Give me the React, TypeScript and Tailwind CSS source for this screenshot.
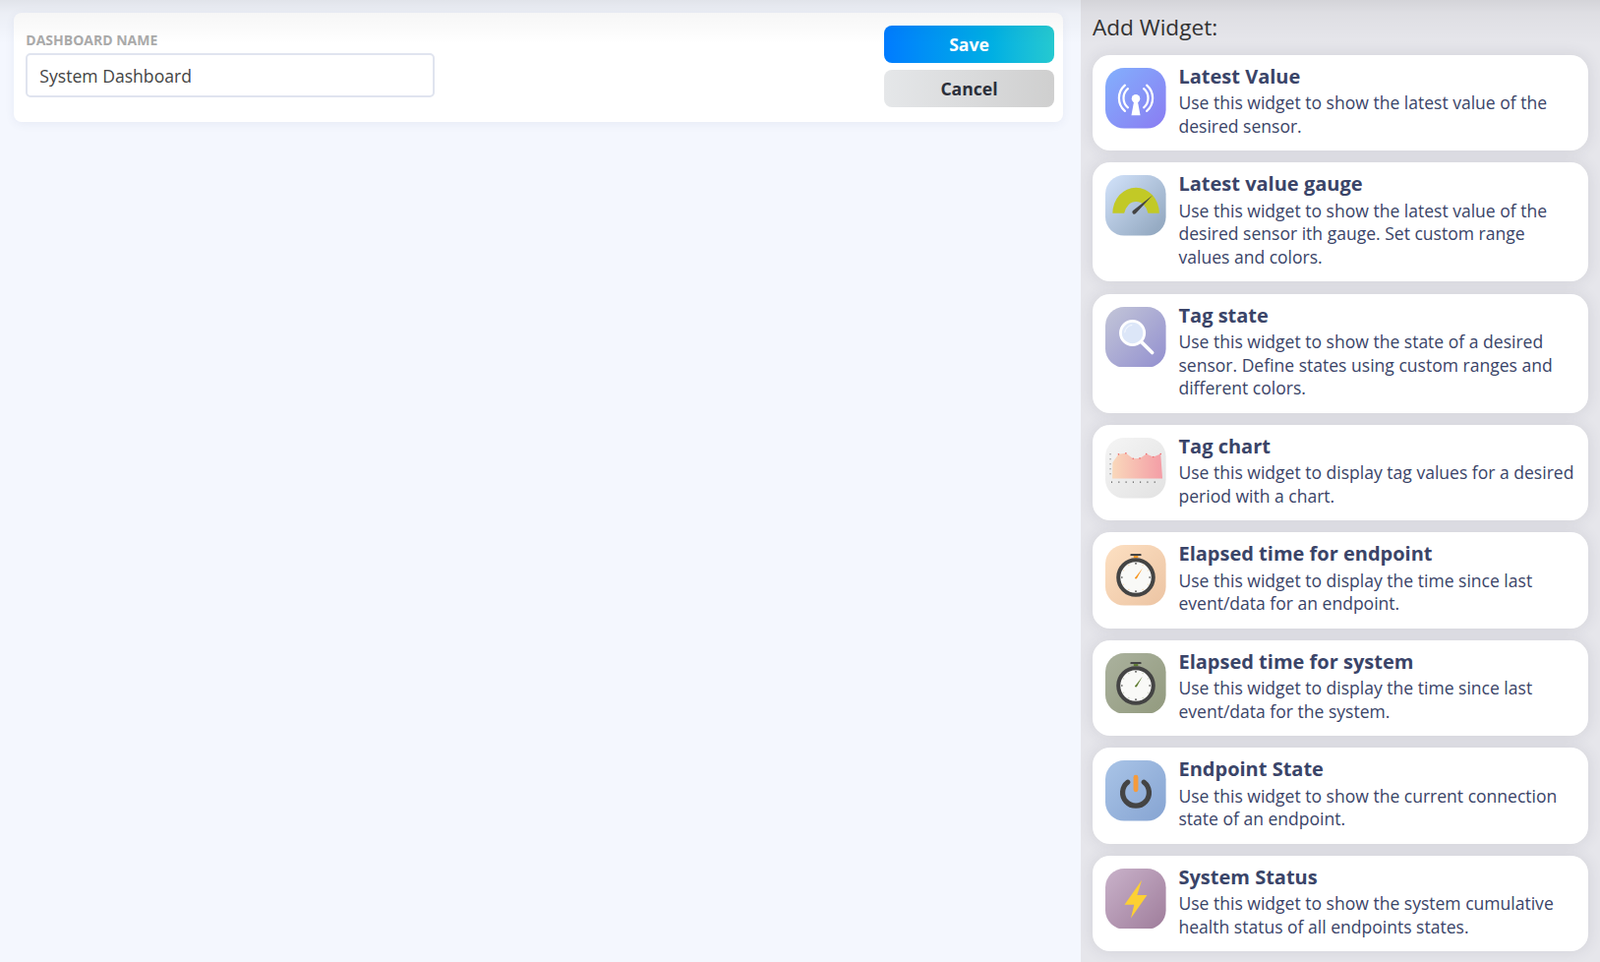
import type { ReactNode } from 'react';

interface Widget {
  title: string;
  desc: string;
  icon: ReactNode;
}

// rounded tile behind every widget icon
function Tile({ id, from, to, children }: { id: string; from: string; to: string; children: ReactNode }) {
  return (
    <svg viewBox="0 0 61 61" className="w-[61.6px] h-[61.6px] shrink-0">
      <defs>
        <linearGradient id={id} x1="0" y1="0" x2="1" y2="1">
          <stop offset="0" stopColor={from} />
          <stop offset="1" stopColor={to} />
        </linearGradient>
      </defs>
      <rect width="61" height="61" rx="19" fill={`url(#${id})`} />
      {children}
    </svg>
  );
}

function Stopwatch({ id, from, to, accent }: { id: string; from: string; to: string; accent: string }) {
  const ticks = [0, 30, 60, 90, 120, 150, 180, 210, 240, 270, 300, 330];
  return (
    <Tile id={id} from={from} to={to}>
      <rect x="25.2" y="9" width="11" height="2" rx="0.6" fill="#444" />
      <rect x="28.5" y="11" width="4.5" height="2" fill={accent} />
      <circle cx="30.7" cy="32.7" r="17.6" fill="#f9f9f7" stroke="#444" strokeWidth="4" />
      {ticks.map((a) => {
        const major = a % 90 === 0;
        const x = 30.7 + 14 * Math.sin((a * Math.PI) / 180);
        const y = 32.7 - 14 * Math.cos((a * Math.PI) / 180);
        return <circle key={a} cx={x} cy={y} r={major ? 0.8 : 0.4} fill={major ? '#333' : accent} />;
      })}
      <path d="M29.8 33.2 L37.4 23.4 L31.6 34 Z" fill={accent} />
      <circle cx="30.7" cy="33.3" r="0.9" fill={accent} />
    </Tile>
  );
}

const widgets: Widget[] = [
  {
    title: 'Latest Value',
    desc: 'Use this widget to show the latest value of the desired sensor.',
    icon: (
      <Tile id="t1" from="#83b0fd" to="#8a7cf2">
        <g fill="none" stroke="#fff" strokeWidth="2.2" strokeLinecap="round">
          <path d="M22.7 21 A12.5 12.5 0 0 0 22.7 40" />
          <path d="M38.7 21 A12.5 12.5 0 0 1 38.7 40" />
          <path d="M19.7 17.5 A17.2 17.2 0 0 0 19.7 43.5" />
          <path d="M41.7 17.5 A17.2 17.2 0 0 1 41.7 43.5" />
        </g>
        <circle cx="30.7" cy="31" r="4.2" fill="#fff" />
        <path d="M29 33 H32.4 L35.2 47.8 H26.2 Z" fill="#fff" />
      </Tile>
    ),
  },
  {
    title: 'Latest value gauge',
    desc: 'Use this widget to show the latest value of the desired sensor ith gauge. Set custom range values and colors.',
    icon: (
      <Tile id="t2" from="#d3e3fb" to="#8da3bb">
        <path d="M7.3 38.5 A23.5 26 0 0 1 54.3 38.5 H43 A12.2 14.2 0 0 0 19 38.5 Z" fill="#c2c926" />
        <path d="M27.6 36 L47.6 20.4 L30.6 38.6 A1.8 1.8 0 0 1 27.6 36 Z" fill="#444" />
      </Tile>
    ),
  },
  {
    title: 'Tag state',
    desc: 'Use this widget to show the state of a desired sensor. Define states using custom ranges and different colors.',
    icon: (
      <Tile id="t3" from="#c3c6d8" to="#928fcf">
        <circle cx="27.3" cy="26.3" r="12" fill="#dce6f8" stroke="#fff" strokeWidth="2.8" />
        <path d="M36.5 35.5 L47.2 46" stroke="#fff" strokeWidth="3.6" strokeLinecap="round" />
        <path d="M19.5 26 A8.5 8.5 0 0 1 27 18.2" fill="none" stroke="#fff" strokeWidth="0.7" />
      </Tile>
    ),
  },
  {
    title: 'Tag chart',
    desc: 'Use this widget to display tag values for a desired period with a chart.',
    icon: (
      <Tile id="t4" from="#f5f5f5" to="#e2e2e2">
        <defs>
          <linearGradient id="t4a" x1="0" y1="0" x2="1" y2="0">
            <stop offset="0" stopColor="#f9d8bb" />
            <stop offset="1" stopColor="#f49da6" />
          </linearGradient>
        </defs>
        <path
          d="M7 41 L7.3 25 L13.3 16.7 L20.7 15.7 L28 21 L34.7 20.7 L41.3 16.3 L48.3 19.3 L55.7 16.3 L57.5 41 Z"
          fill="url(#t4a)"
        />
        <path d="M5 16 V41" stroke="#666" strokeWidth="1" strokeDasharray="1 4" />
        <path d="M6 44.6 H56" stroke="#444" strokeWidth="1.2" strokeDasharray="1 6.2" />
        {[
          [13.3, 16.7],
          [20.7, 15.7],
          [28, 21],
          [34.7, 20.7],
          [41.3, 16.3],
          [48.3, 19.3],
          [55.7, 16.3],
        ].map(([x, y]) => (
          <circle key={x} cx={x} cy={y} r="0.8" fill="#ef6a6a" />
        ))}
      </Tile>
    ),
  },
  {
    title: 'Elapsed time for endpoint',
    desc: 'Use this widget to display the time since last event/data for an endpoint.',
    icon: <Stopwatch id="t5" from="#fde0c2" to="#ecc4a3" accent="#f7941e" />,
  },
  {
    title: 'Elapsed time for system',
    desc: 'Use this widget to display the time since last event/data for the system.',
    icon: <Stopwatch id="t6" from="#abb29e" to="#929a7e" accent="#5d7a2e" />,
  },
  {
    title: 'Endpoint State',
    desc: 'Use this widget to show the current connection state of an endpoint.',
    icon: (
      <Tile id="t7" from="#a9c4e7" to="#86a4d2">
        <path d="M22.5 22 A13.3 13.3 0 1 0 38.9 22" fill="none" stroke="#444" strokeWidth="5.2" strokeLinecap="round" />
        <path d="M30.7 17 V29.5" stroke="#f59b3c" strokeWidth="4.8" strokeLinecap="round" />
      </Tile>
    ),
  },
  {
    title: 'System Status',
    desc: 'Use this widget to show the system cumulative health status of all endpoints states.',
    icon: (
      <Tile id="t8" from="#c9b2ca" to="#9f7d9b">
        <path d="M36.7 11.7 L19.3 36.5 H29 L25.7 50 L42 26.7 H32 Z" fill="#fcd033" />
      </Tile>
    ),
  },
];

export default function App() {
  return (
    <div className="relative flex h-[978px] overflow-hidden bg-[#f4f7fe] font-['Open_Sans',sans-serif]">
      {/* soft shade that falls from the top of the page over everything */}
      <div className="absolute inset-x-0 top-0 h-[45px] bg-[linear-gradient(to_bottom,rgba(0,0,0,0.08),rgba(0,0,0,0.035)_13px,transparent_45px)] pointer-events-none z-10" />

      <main className="flex-1 pl-[14px] pr-[18px] pt-[13.2px]">
        <div className="flex justify-between rounded-lg bg-white pl-[12.3px] pr-[9px] pt-[13px] h-[111px] shadow-[0_2px_10px_rgba(80,90,140,0.08)]">
          <div>
            <label className="block mt-[6px] text-[14px] leading-[18px] font-bold text-[#aaaaaa]">DASHBOARD NAME</label>
            <input
              readOnly
              value="System Dashboard"
              className="mt-[4px] block w-[416px] h-[45px] rounded-[5px] border-2 border-[#e0e4ef] bg-white px-[12px] text-[17.6px] text-[#444] outline-none"
            />
          </div>
          <div className="flex flex-col gap-[7px] w-[173px]">
            <button className="h-[38px] rounded-lg bg-gradient-to-r from-[#007bff] to-[#25c9d0] text-[17.6px] font-bold text-white">
              Save
            </button>
            <button className="h-[38px] rounded-lg bg-gradient-to-r from-[#e5e7e9] to-[#cfcfcf] text-[17.6px] font-bold text-[#2b2f3a]">
              Cancel
            </button>
          </div>
        </div>
      </main>

      <aside className="w-[528px] bg-[#e6e6eb] px-[12px] pt-[12px]">
        <h2 className="text-[22.6px] leading-[32px] text-[#333] mb-[12px]">Add Widget:</h2>
        <div className="flex flex-col gap-[12.25px]">
          {widgets.map((w) => (
            <div key={w.title} className="flex gap-[12.7px] rounded-[17.6px] bg-white pl-[13.2px] pr-[11.5px] pt-[13px] pb-[12.5px] shadow-[0_0_16px_rgba(60,60,80,0.12)]">
              {w.icon}
              <div className="min-w-0 flex-1 -mt-[5px] text-[#3a4468]">
                <div className="text-[20px] leading-[27px] font-bold">{w.title}</div>
                <p className="mt-[2.2px] text-[17.55px] leading-[23.76px]">{w.desc}</p>
              </div>
            </div>
          ))}
        </div>
      </aside>
    </div>
  );
}
